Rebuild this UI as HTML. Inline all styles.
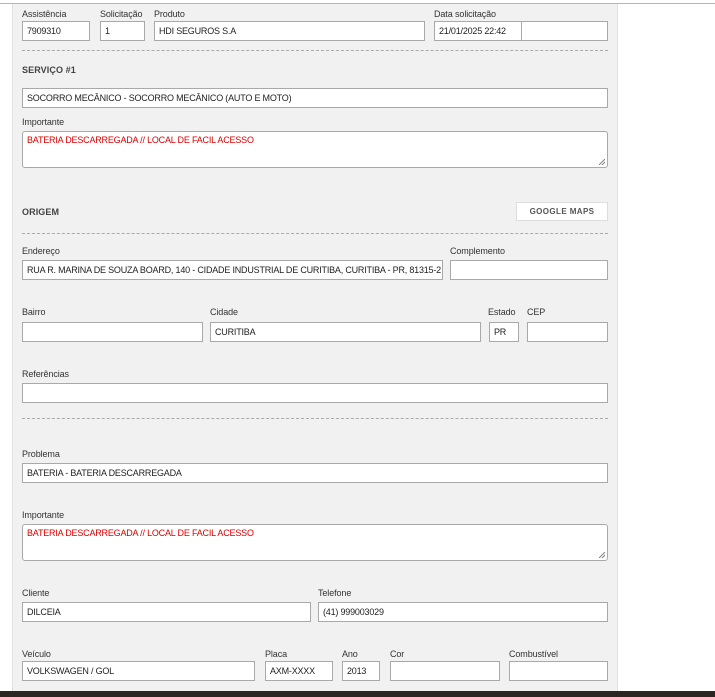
<!DOCTYPE html>
<html><head><meta charset="utf-8"><style>
*{margin:0;padding:0;box-sizing:border-box}
body{width:715px;height:697px;position:relative;background:#fff;font-family:"Liberation Sans",sans-serif;font-size:9px;color:#333;overflow:hidden}
.top{position:absolute;left:0;top:3px;width:715px;height:1px;background:#b8cc3a}
.panel{position:absolute;left:12px;top:4px;width:606px;height:687px;background:#f1f1f1;border-left:1px solid #e0e0e0;border-right:1px solid #e2e2e2}
.bot{position:absolute;left:0;top:691px;width:715px;height:6px;background:#2b2622}
.l{position:absolute;font-size:9px;color:#333;white-space:nowrap;letter-spacing:-0.1px}
.i{position:absolute;height:20px;background:#fff;border:1px solid #a9a9a9;padding:0 4px;line-height:18px;font-size:9px;color:#222;white-space:nowrap;overflow:hidden;letter-spacing:-0.2px}
.t{position:absolute;background:#fff;border:1px solid #a9a9a9;border-radius:3px;padding:3px 4px;font-size:9px;color:#d00;letter-spacing:-0.2px}
.t:after{content:"";position:absolute;right:2px;bottom:2px;width:6px;height:6px;background:linear-gradient(135deg,transparent 45%,#888 45%,#888 55%,transparent 55%,transparent 70%,#888 70%,#888 80%,transparent 80%)}
.d{position:absolute;left:22px;width:586px;border-top:1px dashed #aaa}
.h{position:absolute;font-weight:bold;font-size:9px;color:#444;letter-spacing:0.1px}
.btn{position:absolute;left:516px;top:202px;width:92px;height:19px;background:#fff;border:1px solid #ddd;font-weight:bold;font-size:8px;color:#555;text-align:center;line-height:17px;letter-spacing:0.4px}
</style></head><body>
<div class="top"></div>
<div class="panel"></div>
<div class="bot"></div>

<div class="l" style="left:22px;top:9px">Assistência</div>
<div class="l" style="left:100px;top:9px">Solicitação</div>
<div class="l" style="left:154px;top:9px">Produto</div>
<div class="l" style="left:434px;top:9px">Data solicitação</div>
<div class="i" style="left:22px;top:21px;width:68px">7909310</div>
<div class="i" style="left:100px;top:21px;width:45px">1</div>
<div class="i" style="left:154px;top:21px;width:271px">HDI SEGUROS S.A</div>
<div class="i" style="left:434px;top:21px;width:88px">21/01/2025 22:42</div>
<div class="i" style="left:521px;top:21px;width:87px"></div>
<div class="d" style="top:50px"></div>

<div class="h" style="left:22px;top:65px">SERVIÇO #1</div>
<div class="i" style="left:22px;top:88px;width:586px">SOCORRO MECÂNICO - SOCORRO MECÂNICO (AUTO E MOTO)</div>
<div class="l" style="left:22px;top:117px">Importante</div>
<div class="t" style="left:22px;top:131px;width:586px;height:37px">BATERIA DESCARREGADA // LOCAL DE FACIL ACESSO</div>

<div class="h" style="left:22px;top:207px">ORIGEM</div>
<div class="btn">GOOGLE MAPS</div>
<div class="d" style="top:233px"></div>

<div class="l" style="left:22px;top:246px">Endereço</div>
<div class="l" style="left:450px;top:246px">Complemento</div>
<div class="i" style="left:22px;top:260px;width:421px">RUA R. MARINA DE SOUZA BOARD, 140 - CIDADE INDUSTRIAL DE CURITIBA, CURITIBA - PR, 81315-2</div>
<div class="i" style="left:450px;top:260px;width:158px"></div>

<div class="l" style="left:22px;top:307px">Bairro</div>
<div class="l" style="left:210px;top:307px">Cidade</div>
<div class="l" style="left:488px;top:307px">Estado</div>
<div class="l" style="left:527px;top:307px">CEP</div>
<div class="i" style="left:22px;top:322px;width:181px"></div>
<div class="i" style="left:210px;top:322px;width:271px">CURITIBA</div>
<div class="i" style="left:489px;top:322px;width:30px">PR</div>
<div class="i" style="left:527px;top:322px;width:81px"></div>

<div class="l" style="left:22px;top:369px">Referências</div>
<div class="i" style="left:22px;top:383px;width:586px"></div>
<div class="d" style="top:418px"></div>

<div class="l" style="left:22px;top:449px">Problema</div>
<div class="i" style="left:22px;top:463px;width:586px">BATERIA - BATERIA DESCARREGADA</div>
<div class="l" style="left:22px;top:510px">Importante</div>
<div class="t" style="left:22px;top:524px;width:586px;height:37px">BATERIA DESCARREGADA // LOCAL DE FACIL ACESSO</div>

<div class="l" style="left:22px;top:588px">Cliente</div>
<div class="l" style="left:318px;top:588px">Telefone</div>
<div class="i" style="left:22px;top:602px;width:289px">DILCEIA</div>
<div class="i" style="left:318px;top:602px;width:290px">(41) 999003029</div>

<div class="l" style="left:22px;top:649px">Veículo</div>
<div class="l" style="left:265px;top:649px">Placa</div>
<div class="l" style="left:342px;top:649px">Ano</div>
<div class="l" style="left:390px;top:649px">Cor</div>
<div class="l" style="left:509px;top:649px">Combustível</div>
<div class="i" style="left:22px;top:661px;width:233px">VOLKSWAGEN / GOL</div>
<div class="i" style="left:265px;top:661px;width:68px">AXM-XXXX</div>
<div class="i" style="left:342px;top:661px;width:38px">2013</div>
<div class="i" style="left:390px;top:661px;width:110px"></div>
<div class="i" style="left:509px;top:661px;width:99px"></div>
</body></html>
